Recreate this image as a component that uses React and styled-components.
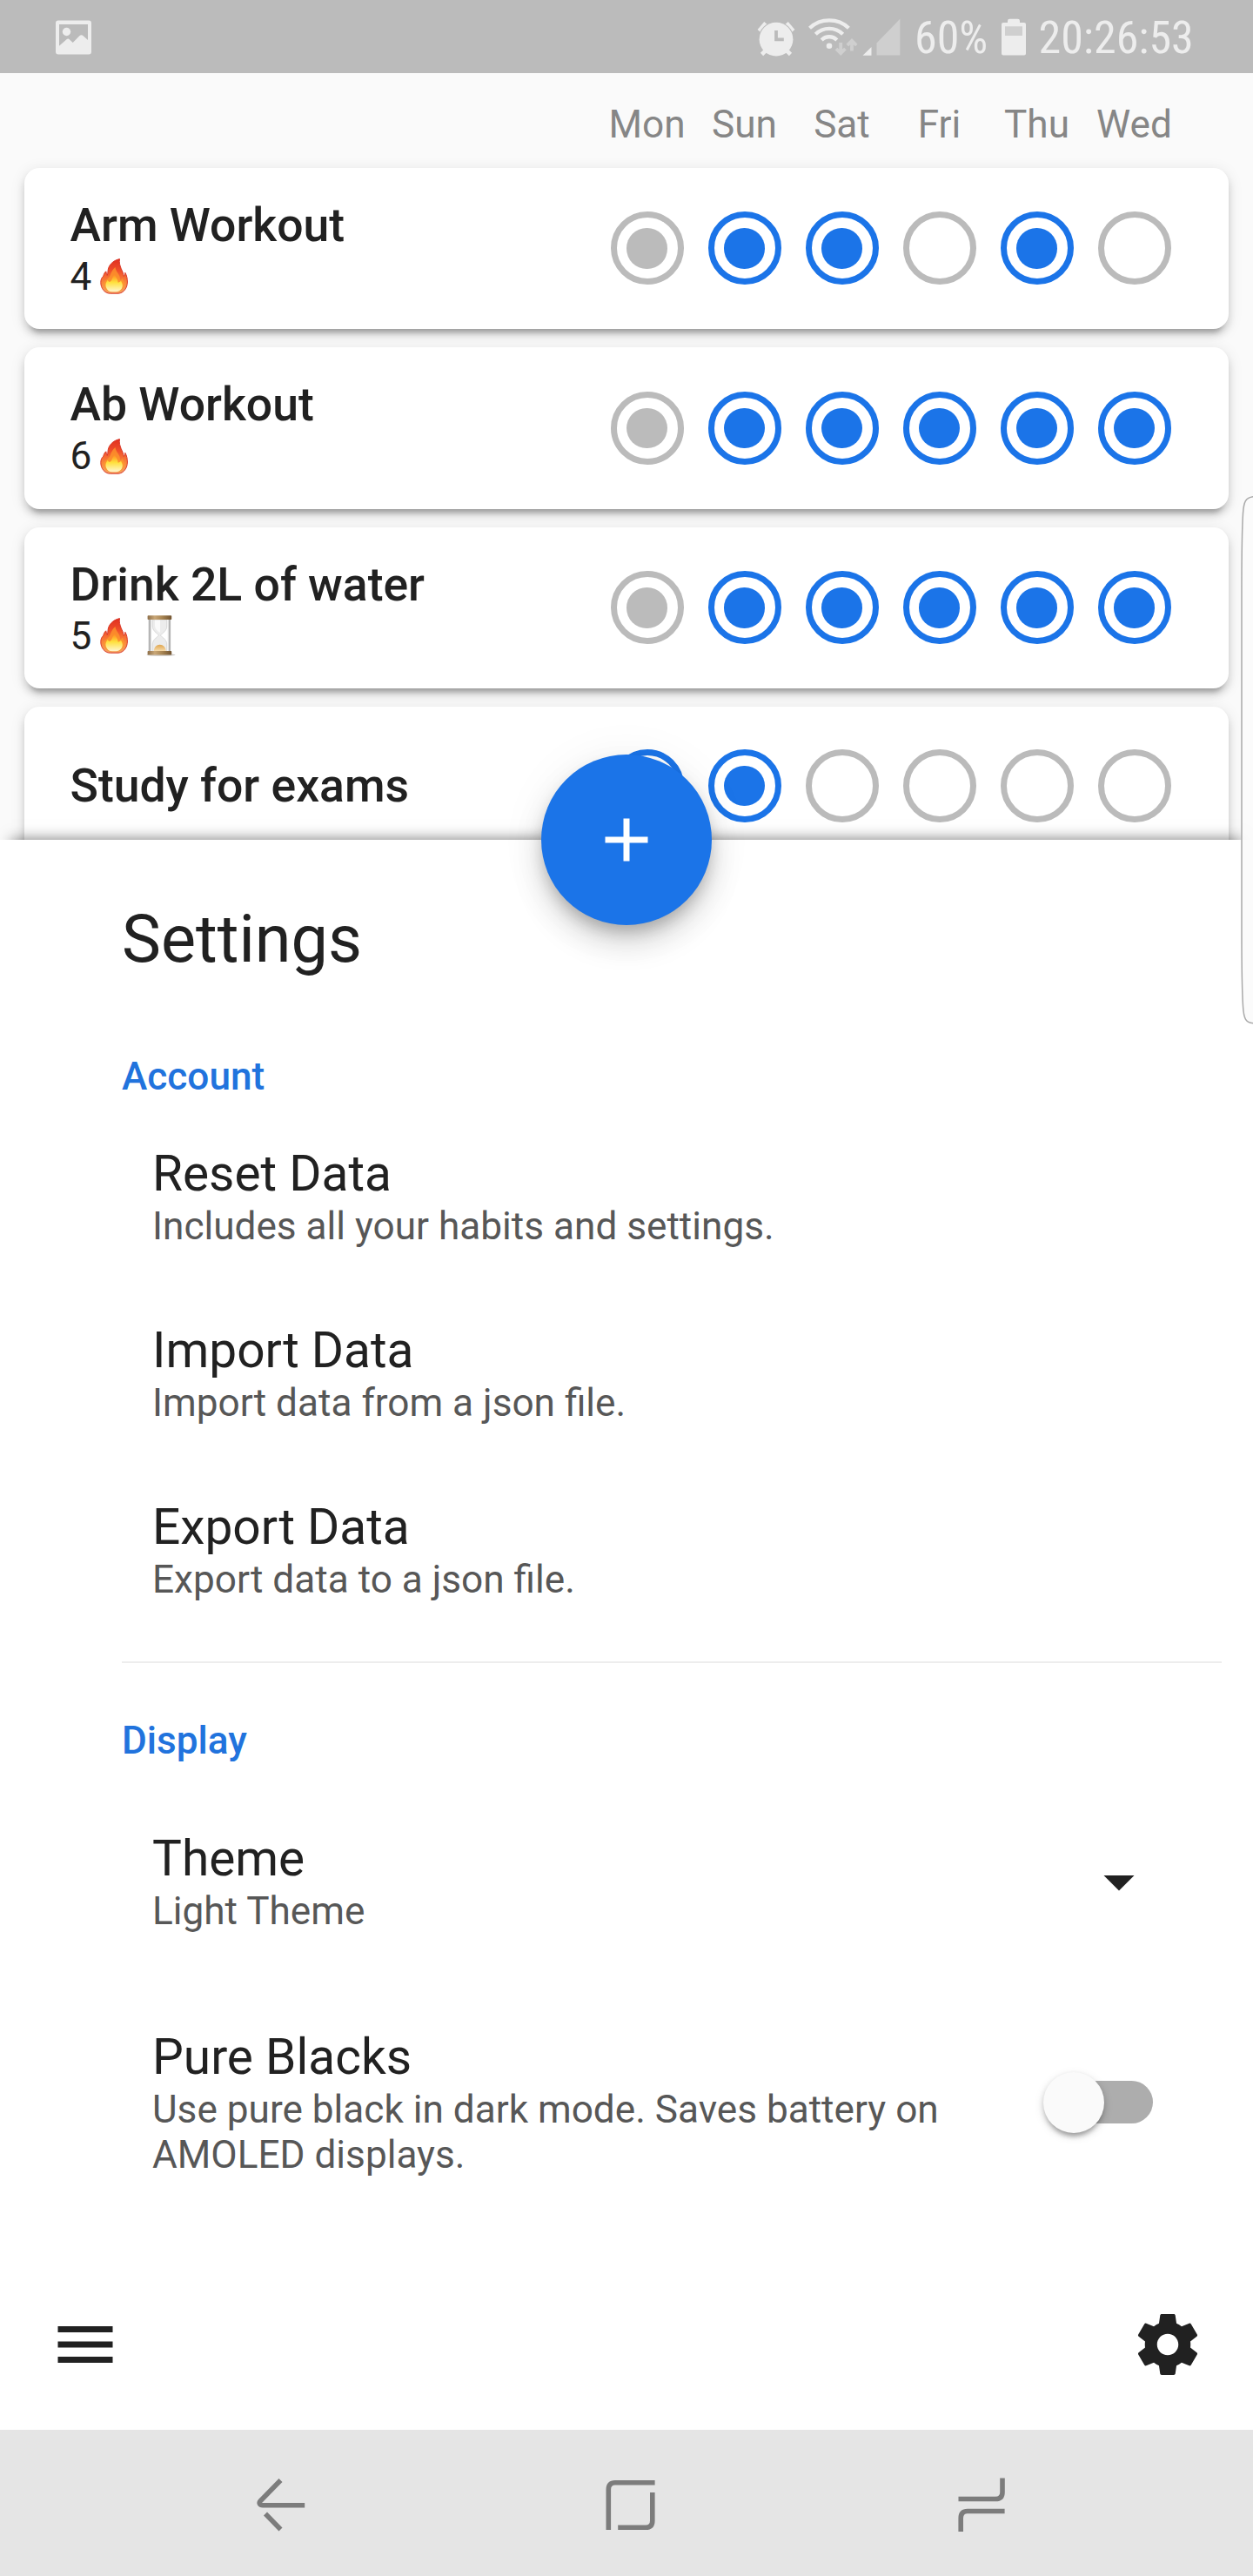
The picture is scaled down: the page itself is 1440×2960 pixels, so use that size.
import React from "react";
import styled, { createGlobalStyle } from "styled-components";

const BLUE = "#1b74e8";
const GREY = "#bbbbbb";
const INK = "#212121";

const GlobalStyle = createGlobalStyle`
  * { box-sizing: border-box; }
  body { margin: 0; background: #fff; font-family: Roboto, "Noto Sans", sans-serif; color: ${INK}; }
`;

const Screen = styled.div`
  position: relative;
  display: flex;
  flex-direction: column;
  width: 1440px;
  height: 2960px;
  overflow: hidden;
`;

/* ---------- status bar ---------- */

const StatusBar = styled.header`
  flex: none;
  display: flex;
  justify-content: space-between;
  align-items: center;
  height: 84px;
  padding: 0 68px 0 62px;
  background: ${GREY};
  color: #ededed;
`;

const StatusGroup = styled.div`
  display: flex;
  align-items: center;
  height: 84px;
`;

const StatusIcon = styled.svg`
  display: block;
  flex: none;
  width: ${(p) => p.$w}px;
  height: 84px;
`;

const StatusText = styled.span`
  width: ${(p) => p.$w}px;
  margin-left: ${(p) => p.$gap}px;
  font-family: "Roboto Condensed", Roboto, sans-serif;
  font-size: 52px;
  line-height: 84px;
  padding-top: 4px;
  white-space: nowrap;
`;

/* ---------- habit list ---------- */

const Habits = styled.main`
  flex: none;
  display: flex;
  flex-direction: column;
  height: 881px;
  padding-top: 32.5px;
  background: #fafafa;
`;

const DayHeader = styled.div`
  flex: none;
  display: flex;
  justify-content: flex-end;
  height: 76px;
  padding-right: 80.5px;
`;

const DayName = styled.span`
  width: 112px;
  text-align: center;
  font-size: 44.15px;
  line-height: 52px;
  color: #868686;
`;

const CardList = styled.div`
  display: flex;
  flex-direction: column;
  gap: 21px;
  padding: 0 28px;
`;

const Card = styled.section`
  flex: none;
  display: flex;
  align-items: center;
  justify-content: space-between;
  height: ${(p) => (p.$short ? 182 : 185.5)}px;
  padding: 0 52.5px;
  border-radius: 17.5px;
  background: #fff;
  box-shadow:
    0 10.5px 5px -7px rgba(0, 0, 0, 0.2),
    0 7px 8px rgba(0, 0, 0, 0.14),
    0 3.5px 17.5px rgba(0, 0, 0, 0.1);
`;

const CardTitle = styled.div`
  font-size: 53.5px;
  font-weight: 500;
  line-height: 66px;
`;

const Streak = styled.div`
  display: flex;
  align-items: center;
  height: 52px;
  margin-bottom: 1.5px;
  font-size: 44.15px;
  line-height: 52px;
`;

const Days = styled.div`
  display: flex;
`;

const DayCell = styled.div`
  display: flex;
  justify-content: center;
  width: 112px;
`;

const Ring = styled.div`
  display: flex;
  align-items: center;
  justify-content: center;
  width: 84px;
  height: 84px;
  border: 7px solid ${(p) => (p.$on ? BLUE : GREY)};
  border-radius: 50%;
`;

const Dot = styled.div`
  width: 46.5px;
  height: 46.5px;
  border-radius: 50%;
  background: ${(p) => (p.$on ? BLUE : GREY)};
`;

const FlameSvg = styled.svg`
  display: block;
  width: 32px;
  height: 41px;
  margin-left: 9.5px;
`;

const GlassSvg = styled.svg`
  display: block;
  width: 34px;
  height: 47px;
  margin-left: 21px;
`;

/* ---------- settings sheet ---------- */

const Sheet = styled.section`
  position: relative;
  flex: none;
  height: 1631px;
  padding-top: 69px;
  background: #fff;
  box-shadow: 0 -14px 16px -14px rgba(0, 0, 0, 0.55);
`;

const SheetTitle = styled.h1`
  margin: 0 0 87px 140px;
  font-size: 75.6px;
  font-weight: 400;
  line-height: 90px;
`;

const SectionTitle = styled.h2`
  margin: 0 0 ${(p) => p.$after}px 140px;
  font-size: 44.15px;
  font-weight: 500;
  line-height: 52px;
  color: #2173dd;
`;

const Item = styled.div`
  display: flex;
  align-items: center;
  justify-content: space-between;
  padding: ${(p) => p.$pad}px ${(p) => p.$right || 112}px ${(p) => p.$pad}px 175px;
`;

const ItemText = styled.div`
  max-width: 960px;
`;

const ItemTitle = styled.div`
  font-size: 56.8px;
  line-height: 68px;
`;

const ItemHint = styled.div`
  font-size: 44.15px;
  line-height: 52px;
  color: #575757;
`;

const Divider = styled.hr`
  height: 2px;
  margin: 27px 36px 62.5px 140px;
  border: 0;
  background: #ededed;
`;

const Icon84 = styled.svg`
  display: block;
  flex: none;
  width: 84px;
  height: 84px;
  fill: ${INK};
`;

const Track = styled.div`
  display: flex;
  align-items: center;
  flex: none;
  width: 115.5px;
  height: 49px;
  border-radius: 25px;
  background: #adadad;
`;

const Thumb = styled.div`
  width: 70px;
  height: 70px;
  margin-left: -10.5px;
  border-radius: 50%;
  background: #fafafa;
  box-shadow:
    0 7px 5px -3.5px rgba(0, 0, 0, 0.2),
    0 3.5px 6px rgba(0, 0, 0, 0.16),
    0 3.5px 12px rgba(0, 0, 0, 0.12);
`;

/* ---------- bottom bars and overlays ---------- */

const BottomBar = styled.nav`
  flex: none;
  display: flex;
  align-items: center;
  justify-content: space-between;
  height: 196px;
  padding: 0 56px;
  background: #fff;
`;

const SystemNav = styled.footer`
  flex: none;
  display: flex;
  align-items: center;
  justify-content: space-between;
  height: 168px;
  padding: 0 280px 4px 288px;
  background: #e5e5e5;
`;

const NavIcon = styled.svg`
  display: block;
  width: 70px;
  height: 70px;
  fill: none;
  stroke: #7c7c7c;
  stroke-width: 5.6px;
`;

const Fab = styled.button`
  position: absolute;
  left: 622px;
  top: 867px;
  display: flex;
  align-items: center;
  justify-content: center;
  width: 196px;
  height: 196px;
  padding: 0;
  border: 0;
  border-radius: 50%;
  background: ${BLUE};
  box-shadow:
    0 10.5px 17.5px -3.5px rgba(0, 0, 0, 0.22),
    0 21px 35px rgba(0, 0, 0, 0.15),
    0 3.5px 56px rgba(0, 0, 0, 0.06);
`;

const EdgeHandle = styled.svg`
  position: absolute;
  right: 0;
  top: 568px;
  width: 16px;
  height: 612px;
`;

const DAYS = ["Mon", "Sun", "Sat", "Fri", "Thu", "Wed"];

/* marks: g = grey dot, b = blue dot, - = empty */
const HABITS = [
  { name: "Arm Workout", streak: 4, marks: "gbb-b-" },
  { name: "Ab Workout", streak: 6, marks: "gbbbbb" },
  { name: "Drink 2L of water", streak: 5, waiting: true, marks: "gbbbbb" },
  { name: "Study for exams", marks: "bb----" },
];

const ACCOUNT = [
  ["Reset Data", "Includes all your habits and settings."],
  ["Import Data", "Import data from a json file."],
  ["Export Data", "Export data to a json file."],
];

function Flame() {
  return (
    <FlameSvg viewBox="0 0 32 41">
      <defs>
        <linearGradient id="fo" x1="0" y1="0" x2="0" y2="1">
          <stop offset="0" stopColor="#e02f1f" />
          <stop offset="0.35" stopColor="#f0502a" />
          <stop offset="0.7" stopColor="#f98a3c" />
          <stop offset="1" stopColor="#f3a266" />
        </linearGradient>
        <linearGradient id="fi" x1="0" y1="0" x2="0" y2="1">
          <stop offset="0" stopColor="#ff8a1f" />
          <stop offset="0.45" stopColor="#ffe03c" />
          <stop offset="1" stopColor="#fff6cf" />
        </linearGradient>
      </defs>
      <path
        d="M22.5 0.6C15 2.2 9.5 7.500 9 14.500C8.800 16.500 9 17.500 8.300 19.500C7.500 18 7 16.500 6.800 14.800C5 16.300 4.300 18.200 3.800 20.200C2 22 0.800 24 0.800 27.500C0.800 34.500 5.500 40.200 11.500 40.200H21C27 39.800 31.400 34 31.400 27C31.400 23.500 30.800 19.500 28.800 16.300C28.800 18 28.300 19.500 27.300 20.500C26.800 14.500 21 9 22.500 0.600Z"
        fill="url(#fo)"
        stroke="#d9382a"
        strokeWidth="1"
      />
      <path
        d="M17.500 10C12 14 12.500 21 8.500 23.500C5 25.500 3.800 28.500 4.600 31.500C5.500 36 9 38.600 13 38.600H19.500C24.500 38.300 28.300 34 28 29C27.800 26.500 26.500 25.500 26 22.500C25 24 24 24.600 23 24.800C23.500 18.500 18 15.500 17.500 10Z"
        fill="#fd9a2b"
        opacity="0.75"
      />
      <path
        d="M17 18.500C13.500 21 14.500 25.500 11 27C9.500 26.500 9 25.500 8.800 24.500C6.800 27.500 5.800 30 6.800 33C8 36.500 10.500 38.300 14 38.300H18.500C23 38 26 34.500 25.800 30.500C25.600 28.500 24.500 27 24 25.500C23 27 21.800 27.500 20.500 27.500C20.700 23.500 17.500 21.500 17 18.500Z"
        fill="url(#fi)"
      />
    </FlameSvg>
  );
}

function Hourglass() {
  return (
    <GlassSvg viewBox="0 0 34 47">
      <defs>
        <linearGradient id="hw" x1="0" y1="0" x2="1" y2="0">
          <stop offset="0" stopColor="#8d6e48" />
          <stop offset="0.3" stopColor="#c9a777" />
          <stop offset="0.6" stopColor="#a98654" />
          <stop offset="1" stopColor="#71532f" />
        </linearGradient>
        <linearGradient id="hs" x1="0" y1="0" x2="0" y2="1">
          <stop offset="0" stopColor="#dfa54e" />
          <stop offset="1" stopColor="#f8deb0" />
        </linearGradient>
      </defs>
      <ellipse cx="17" cy="45.500" rx="16.500" ry="1.300" fill="#cbc8c4" />
      <path d="M3.800 4V42M27 4V42" stroke="#b4b4b4" strokeWidth="2.200" />
      <path d="M5.500 4V42M25.300 4V42" stroke="#dcdcdc" strokeWidth="1" />
      <path
        d="M7.300 5H23.700V13C23.700 17.500 19 20.500 16.300 23C19 25.500 23.700 28.500 23.700 33V41.500H7.300V33C7.300 28.500 12 25.500 14.700 23C12 20.500 7.300 17.500 7.300 13Z"
        fill="#ececec"
        stroke="#d2d2d2"
        strokeWidth="0.800"
      />
      <path d="M10 5.500H16V20C12.500 18 10 15.500 10 12Z" fill="#fafafa" />
      <path d="M8.800 41.500C8.800 36.500 12 33.700 15.700 33.700S22.700 36.500 22.700 41.500Z" fill="url(#hs)" />
      <rect x="1.600" y="0.300" width="27.600" height="4.700" rx="0.800" fill="url(#hw)" />
      <rect x="1.600" y="41" width="27.600" height="4.500" rx="0.800" fill="url(#hw)" />
    </GlassSvg>
  );
}

function StatusIcons() {
  return (
    <StatusIcon $w={182} viewBox="868 0 182 84">
      <path d="M872.300 35.500L880 26.500M911.700 35.500L904 26.500" stroke="#ededed" strokeWidth="4.600" />
      <circle cx="892" cy="45.200" r="20.400" fill={GREY} />
      <path d="M875.500 62.500L881.500 56.500M908.500 62.500L902.500 56.500" stroke="#ededed" strokeWidth="4.600" />
      <circle cx="892" cy="45.200" r="19.400" fill="#ededed" />
      <path d="M892 35V45.300H900.800" stroke={GREY} strokeWidth="3.800" fill="none" />
      <g stroke="#ededed" strokeWidth="4.300" fill="none">
        <path d="M930.500 32.300C943 20.500 963 20.500 975.400 32.300" />
        <path d="M937.300 39.300C946 30.700 960 30.700 968.600 39.300" />
        <path d="M944.200 46C949 41 957 41 961.800 46" />
      </g>
      <circle cx="953" cy="52.800" r="3.300" fill="#ededed" />
      <path d="M966.200 49V61M961 56L966.200 61.200L971.400 56" stroke="#cfcfcf" strokeWidth="3.800" fill="none" />
      <path d="M979 58.500V47M973.800 52L979 46.800L984.200 52" stroke="#cfcfcf" strokeWidth="3.800" fill="none" />
      <path d="M991.500 63.800L1001.500 54V63.800Z" fill="#ededed" />
      <path d="M1007.500 63.500V49.500L1034.300 21.700V63.500Z" fill="#cfcfcf" />
    </StatusIcon>
  );
}

export default function App() {
  return (
    <Screen>
      <GlobalStyle />

      <StatusBar>
        <StatusIcon $w={46} viewBox="62 0 46 84">
          <path
            fill="#ededed"
            fillRule="evenodd"
            d="M67 23.500H102A3 3 0 0 1 105 26.500V59.500A3 3 0 0 1 102 62.500H67A3 3 0 0 1 64 59.500V26.500A3 3 0 0 1 67 23.500ZM68 28V52.800L76.500 45.200Q78.300 43.800 80 45.500L83.700 49L91.300 41.300Q93.500 39.300 95.700 41.300L101 46V28Z"
          />
          <circle cx="76.500" cy="36.500" r="4.700" fill="#ededed" />
        </StatusIcon>
        <StatusGroup>
          <StatusIcons />
          <StatusText $w={96} $gap={1}>60%</StatusText>
          <StatusIcon $w={34} viewBox="1147 0 34 84">
            <path
              fill="#ededed"
              d="M1153 26H1158V24A2.300 2.300 0 0 1 1160.300 21.700H1169.700A2.300 2.300 0 0 1 1172 24V26H1177A2 2 0 0 1 1179 28V61.500A2 2 0 0 1 1177 63.500H1153A2 2 0 0 1 1151 61.500V28A2 2 0 0 1 1153 26Z"
            />
            <path fill="#cfcfcf" d="M1155 30.300H1175V41H1155Z" />
          </StatusIcon>
          <StatusText $w={178.5} $gap={12.5}>20:26:53</StatusText>
        </StatusGroup>
      </StatusBar>

      <Habits>
        <DayHeader>
          {DAYS.map((d) => (
            <DayName key={d}>{d}</DayName>
          ))}
        </DayHeader>
        <CardList>
          {HABITS.map((h) => (
            <Card key={h.name} $short={!h.streak}>
              <div>
                <CardTitle>{h.name}</CardTitle>
                {h.streak && (
                  <Streak>
                    {h.streak}
                    <Flame />
                    {h.waiting && <Hourglass />}
                  </Streak>
                )}
              </div>
              <Days>
                {h.marks.split("").map((m, i) => (
                  <DayCell key={i}>
                    <Ring $on={m === "b"}>{m !== "-" && <Dot $on={m === "b"} />}</Ring>
                  </DayCell>
                ))}
              </Days>
            </Card>
          ))}
        </CardList>
      </Habits>

      <Sheet>
        <SheetTitle>Settings</SheetTitle>
        <SectionTitle $after={10}>Account</SectionTitle>
        {ACCOUNT.map(([title, hint]) => (
          <Item key={title} $pad={41.5}>
            <ItemText>
              <ItemTitle>{title}</ItemTitle>
              <ItemHint>{hint}</ItemHint>
            </ItemText>
          </Item>
        ))}
        <Divider />
        <SectionTitle $after={22}>Display</SectionTitle>
        <Item $pad={54}>
          <ItemText>
            <ItemTitle>Theme</ItemTitle>
            <ItemHint>Light Theme</ItemHint>
          </ItemText>
          <Icon84 viewBox="0 0 24 24">
            <path d="M7 10l5 5 5-5z" />
          </Icon84>
        </Item>
        <Item $pad={54} $right={115.5}>
          <ItemText>
            <ItemTitle>Pure Blacks</ItemTitle>
            <ItemHint>Use pure black in dark mode. Saves battery on AMOLED displays.</ItemHint>
          </ItemText>
          <Track>
            <Thumb />
          </Track>
        </Item>
      </Sheet>

      <BottomBar>
        <Icon84 viewBox="0 0 24 24">
          <path d="M3 18h18v-2H3v2zm0-5h18v-2H3v2zm0-7v2h18V6H3z" />
        </Icon84>
        <Icon84 viewBox="0 0 24 24">
          <path d="M19.430 12.980c.04-.32.07-.64.07-.98s-.03-.66-.07-.98l2.110-1.650c.19-.15.24-.42.12-.64l-2-3.460c-.12-.22-.39-.3-.61-.22l-2.490 1c-.52-.4-1.080-.73-1.690-.98l-.38-2.650C14.460 2.180 14.250 2 14 2h-4c-.25 0-.46.18-.49.42l-.38 2.650c-.61.25-1.170.59-1.690.98l-2.490-1c-.23-.09-.49 0-.61.22l-2 3.460c-.13.22-.07.49.12.64l2.110 1.650c-.04.32-.07.65-.07.98s.03.66.07.98l-2.110 1.650c-.19.15-.24.42-.12.64l2 3.460c.12.22.39.3.61.22l2.490-1c.52.4 1.080.73 1.690.98l.38 2.650c.03.24.24.42.49.42h4c.25 0 .46-.18.49-.42l.38-2.650c.61-.25 1.170-.59 1.690-.98l2.490 1c.23.09.49 0 .61-.22l2-3.460c.12-.22.07-.49-.12-.64l-2.110-1.650zM12 15.500c-1.930 0-3.500-1.570-3.500-3.500s1.570-3.500 3.500-3.500 3.500 1.570 3.500 3.500-1.570 3.500-3.500 3.500z" />
        </Icon84>
      </BottomBar>

      <SystemNav>
        <NavIcon viewBox="288 2839 70 70">
          <path d="M322.500 2850L299.300 2873.700C297 2876.300 298.500 2878.800 302 2878.800H350.200" />
          <path d="M305 2888.500L322.500 2906.500" />
        </NavIcon>
        <NavIcon viewBox="689 2839 70 70">
          <path d="M699.300 2907V2860.500Q699.300 2852.700 707 2852.700H752.600" />
          <path d="M749.800 2864V2896.500Q749.800 2904.300 742 2904.300H710.200" />
        </NavIcon>
        <NavIcon viewBox="1090 2839 70 70">
          <path d="M1152 2847.500V2863.700Q1152 2871.500 1144 2871.500H1101.500" />
          <path d="M1104.200 2909.500V2893.500Q1104.200 2885.500 1112 2885.500H1154.600" />
        </NavIcon>
      </SystemNav>

      <Fab aria-label="Add habit">
        <Icon84 viewBox="0 0 24 24">
          <path d="M19 13h-6v6h-2v-6H5v-2h6V5h2v6h6v2z" fill="#fff" />
        </Icon84>
      </Fab>

      <EdgeHandle viewBox="1424 568 16 612">
        <path
          d="M1442 570.500C1431 571 1429.300 577 1428.500 590C1427.500 606 1427 640 1427 680V1070C1427 1110 1427.500 1140 1428.500 1156C1429.300 1170 1431 1175.500 1442 1176"
          fill="#fafafa"
          fillOpacity="0.85"
          stroke="#a9a9a9"
          strokeWidth="1.500"
        />
      </EdgeHandle>
    </Screen>
  );
}
